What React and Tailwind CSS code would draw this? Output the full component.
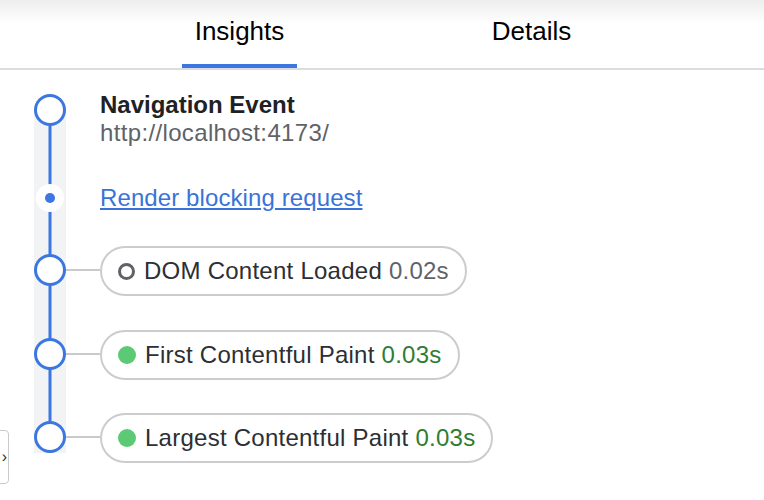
import React from 'react'

const BLUE = '#3b76e1'

function Rail() {
  // drawing of the timeline rail; y coords are page y minus 70
  const nodes = [200, 284, 367]
  return (
    <svg width="100" height="400" viewBox="0 0 100 400" className="shrink-0 block">
      <rect x="34" y="40" width="32" height="343" fill="#f1f3f4" />
      <line x1="50" y1="40" x2="50" y2="367" stroke={BLUE} strokeWidth="3" />
      {nodes.map(y => (
        <line key={'c' + y} x1="64" y1={y} x2="100" y2={y} stroke="#c9cacd" strokeWidth="2" />
      ))}
      <circle cx="50" cy="40" r="14.5" fill="#fff" stroke={BLUE} strokeWidth="3" />
      <circle cx="50" cy="128" r="14" fill="#fff" />
      <circle cx="50" cy="128" r="5" fill={BLUE} />
      {nodes.map(y => (
        <circle key={y} cx="50" cy={y} r="14.5" fill="#fff" stroke={BLUE} strokeWidth="3" />
      ))}
    </svg>
  )
}

function Pill({ label, time, ok, className }) {
  return (
    <div className={'self-start h-[50px] flex items-center gap-[9px] pl-[16px] pr-[16px] border-2 border-[#cbccd0] rounded-full ' + (className || '')}>
      {ok
        ? <span className="w-[18px] h-[18px] rounded-full bg-[#5cc974]" />
        : <span className="w-[17px] h-[17px] rounded-full border-[3.5px] border-[#5f6368]" />}
      <span className="text-[24px] leading-[28px] tracking-[0.25px] text-[#2c2f33]">
        {label}{' '}
        <span className={ok ? 'text-[#2e7d32]' : 'text-[#5f6368]'}>{time}</span>
      </span>
    </div>
  )
}

export default function App() {
  return (
    <div className="w-[764px] h-[500px] overflow-hidden relative bg-white font-['Liberation_Sans',Arial,sans-serif]">

      {/* Tabs */}
      <div className="h-[70px] border-b-2 border-[#dadce0] bg-[linear-gradient(to_bottom,#eeeeee,#ffffff_24px)] flex">
        <div className="ml-[182px] w-[115px] flex flex-col items-center">
          <span className="pt-[16px] text-[26px] leading-[30px] text-black">Insights</span>
          <span className="mt-auto w-full h-[4px] bg-[#3b76e1]" />
        </div>
        <div className="ml-[183px] w-[103px] flex flex-col items-center">
          <span className="pt-[16px] text-[26px] leading-[30px] text-black">Details</span>
        </div>
      </div>

      {/* Timeline */}
      <div className="flex">
        <Rail />
        <div className="flex flex-col pt-[21px]">
          <div className="text-[24px] leading-[28px] font-bold text-[#202124]">Navigation Event</div>
          <div className="text-[24px] leading-[28px] tracking-[0.35px] text-[#5f6368]">http://localhost:4173/</div>
          <a className="mt-[37px] self-start text-[24px] leading-[28px] tracking-[0.1px] text-[#3a73d8] underline underline-offset-2 cursor-pointer">
            Render blocking request
          </a>
          <Pill className="mt-[34px]" label="DOM Content Loaded" time="0.02s" />
          <Pill className="mt-[34px]" ok label="First Contentful Paint" time="0.03s" />
          <Pill className="mt-[33px]" ok label="Largest Contentful Paint" time="0.03s" />
        </div>
      </div>

      {/* collapsed side toggle, mostly off-screen */}
      <div className="absolute left-[-30px] top-[430px] w-[39px] h-[54px] border border-[#c9cacd] rounded-[4px] bg-white flex items-center justify-end pr-[1px] text-[16px] text-[#333]">
        ›
      </div>
    </div>
  )
}
